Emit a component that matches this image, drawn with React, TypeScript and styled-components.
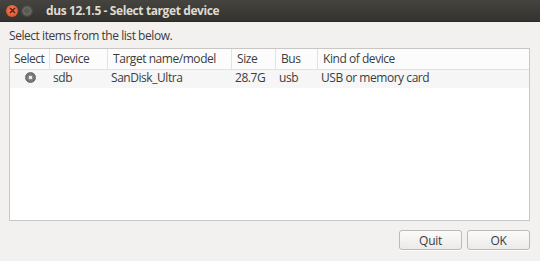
import styled, { createGlobalStyle } from "styled-components";

const GlobalStyle = createGlobalStyle`
  html, body {
    margin: 0;
    padding: 0;
    background: #f2f1f0;
  }
  body {
    font-family: "Open Sans", "DejaVu Sans", sans-serif;
    font-size: 12px;
    letter-spacing: -0.45px;
    color: #3c3c3c;
  }
`;

interface Column {
  title: string;
  width: number;
}

const columns: Column[] = [
  { title: "Select", width: 40 },
  { title: "Device", width: 58 },
  { title: "Target name/model", width: 124 },
  { title: "Size", width: 44 },
  { title: "Bus", width: 42 },
  { title: "Kind of device", width: 0 },
];

const rows = [
  { device: "sdb", model: "SanDisk_Ultra", size: "28.7G", bus: "usb", kind: "USB or memory card" },
];

export default function App() {
  return (
    <>
      <GlobalStyle />
      <SWindow>
        <STitleBar>
          <SWindowButtons>
            <SCloseButton>
              <svg width="7" height="7" viewBox="0 0 7 7">
                <path d="M1 1 L6 6 M6 1 L1 6" stroke="#5a1a08" strokeWidth="1.4" />
              </svg>
            </SCloseButton>
            <SMinButton />
          </SWindowButtons>
          <STitle>dus 12.1.5 - Select target device</STitle>
        </STitleBar>
        <SBody>
          <SPrompt>Select items from the list below.</SPrompt>
          <STable>
            <SHeaderRow>
              {columns.map((c, i) => (
                <SHeaderCell key={c.title} $width={c.width} $first={i === 0}>
                  {c.title}
                </SHeaderCell>
              ))}
            </SHeaderRow>
            {rows.map((r) => (
              <SRow key={r.device}>
                <SCell $width={columns[0].width} $center>
                  <SRadio />
                </SCell>
                <SCell $width={columns[1].width}>{r.device}</SCell>
                <SCell $width={columns[2].width}>{r.model}</SCell>
                <SCell $width={columns[3].width}>{r.size}</SCell>
                <SCell $width={columns[4].width}>{r.bus}</SCell>
                <SCell $width={0}>{r.kind}</SCell>
              </SRow>
            ))}
          </STable>
          <SFooter>
            <SButton>Quit</SButton>
            <SButton>OK</SButton>
          </SFooter>
        </SBody>
      </SWindow>
    </>
  );
}

const SWindow = styled.div`
  width: 540px;
  height: 261px;
  display: flex;
  flex-direction: column;
  overflow: hidden;
`;

const STitleBar = styled.div`
  height: 21px;
  display: flex;
  align-items: center;
  background: linear-gradient(#45443f, #3a3935 60%, #34332f);
  border-bottom: 1px solid #2a2926;
`;

const SWindowButtons = styled.div`
  display: flex;
  gap: 3px;
  padding-left: 6px;
  width: 35px;
`;

const SCloseButton = styled.div`
  width: 12px;
  height: 12px;
  border-radius: 50%;
  background: radial-gradient(circle at 50% 40%, #f6835a, #e2572c 70%, #b9431f);
  display: flex;
  align-items: center;
  justify-content: center;
`;

const SMinButton = styled.div`
  width: 12px;
  height: 12px;
  border-radius: 50%;
  box-sizing: border-box;
  background: radial-gradient(circle, #5a5954 35%, #6f6e69 45%, #55544f 70%);
  border: 1px solid #4a4945;
`;

const STitle = styled.div`
  font-family: "Open Sans", sans-serif;
  font-weight: 700;
  font-size: 12px;
  letter-spacing: -0.4px;
  color: #dfdbd2;
  padding-left: 5px;
`;

const SBody = styled.div`
  flex: 1;
  display: flex;
  flex-direction: column;
  padding: 0 10px 0 9px;
`;

const SPrompt = styled.div`
  height: 26px;
  line-height: 28px;
  font-size: 12px;
  color: #3c3c3c;
`;

const STable = styled.div`
  height: 173px;
  background: #ffffff;
  border: 1px solid #c9c7c3;
  box-sizing: border-box;
  display: flex;
  flex-direction: column;
`;

const SHeaderRow = styled.div`
  display: flex;
  height: 20px;
  background: #fcfcfc;
  border-bottom: 1px solid #e2e0dd;
`;

const SHeaderCell = styled.div<{ $width: number; $first: boolean }>`
  ${(p) => (p.$width ? `width: ${p.$width}px;` : "flex: 1;")}
  box-sizing: border-box;
  padding-left: ${(p) => (p.$first ? 4 : 5)}px;
  line-height: 20px;
  color: #3c3c3c;
  white-space: nowrap;
  border-right: ${(p) => (p.$width ? "1px solid #e4e2df" : "none")};
`;

const SRow = styled.div`
  display: flex;
  height: 18px;
  background: #f6f6f6;
`;

const SCell = styled.div<{ $width: number; $center?: boolean }>`
  ${(p) => (p.$width ? `width: ${p.$width}px;` : "flex: 1;")}
  box-sizing: border-box;
  height: 15px;
  padding-left: ${(p) => (p.$center ? 0 : 3)}px;
  display: flex;
  align-items: center;
  justify-content: ${(p) => (p.$center ? "center" : "flex-start")};
  white-space: nowrap;
  color: #3c3c3c;
`;

const SRadio = styled.div`
  width: 11px;
  height: 11px;
  border-radius: 50%;
  box-sizing: border-box;
  background: radial-gradient(circle, #ececec 22%, #8a8a8a 32%, #6e6e6e 70%);
  border: 1px solid #6a6a6a;
`;

const SFooter = styled.div`
  flex: 1;
  display: flex;
  justify-content: flex-end;
  align-items: flex-start;
  gap: 5px;
  padding-top: 9px;
`;

const SButton = styled.button`
  width: 63px;
  height: 20px;
  box-sizing: border-box;
  font-family: "Open Sans", sans-serif;
  font-size: 12px;
  letter-spacing: -0.3px;
  color: #3c3c3c;
  border: 1px solid #bcbab6;
  border-radius: 3px;
  background: linear-gradient(#fbfbfb, #ebeae8);
  box-shadow: 0 1px 0 rgba(255, 255, 255, 0.8);
  padding: 0;
`;
